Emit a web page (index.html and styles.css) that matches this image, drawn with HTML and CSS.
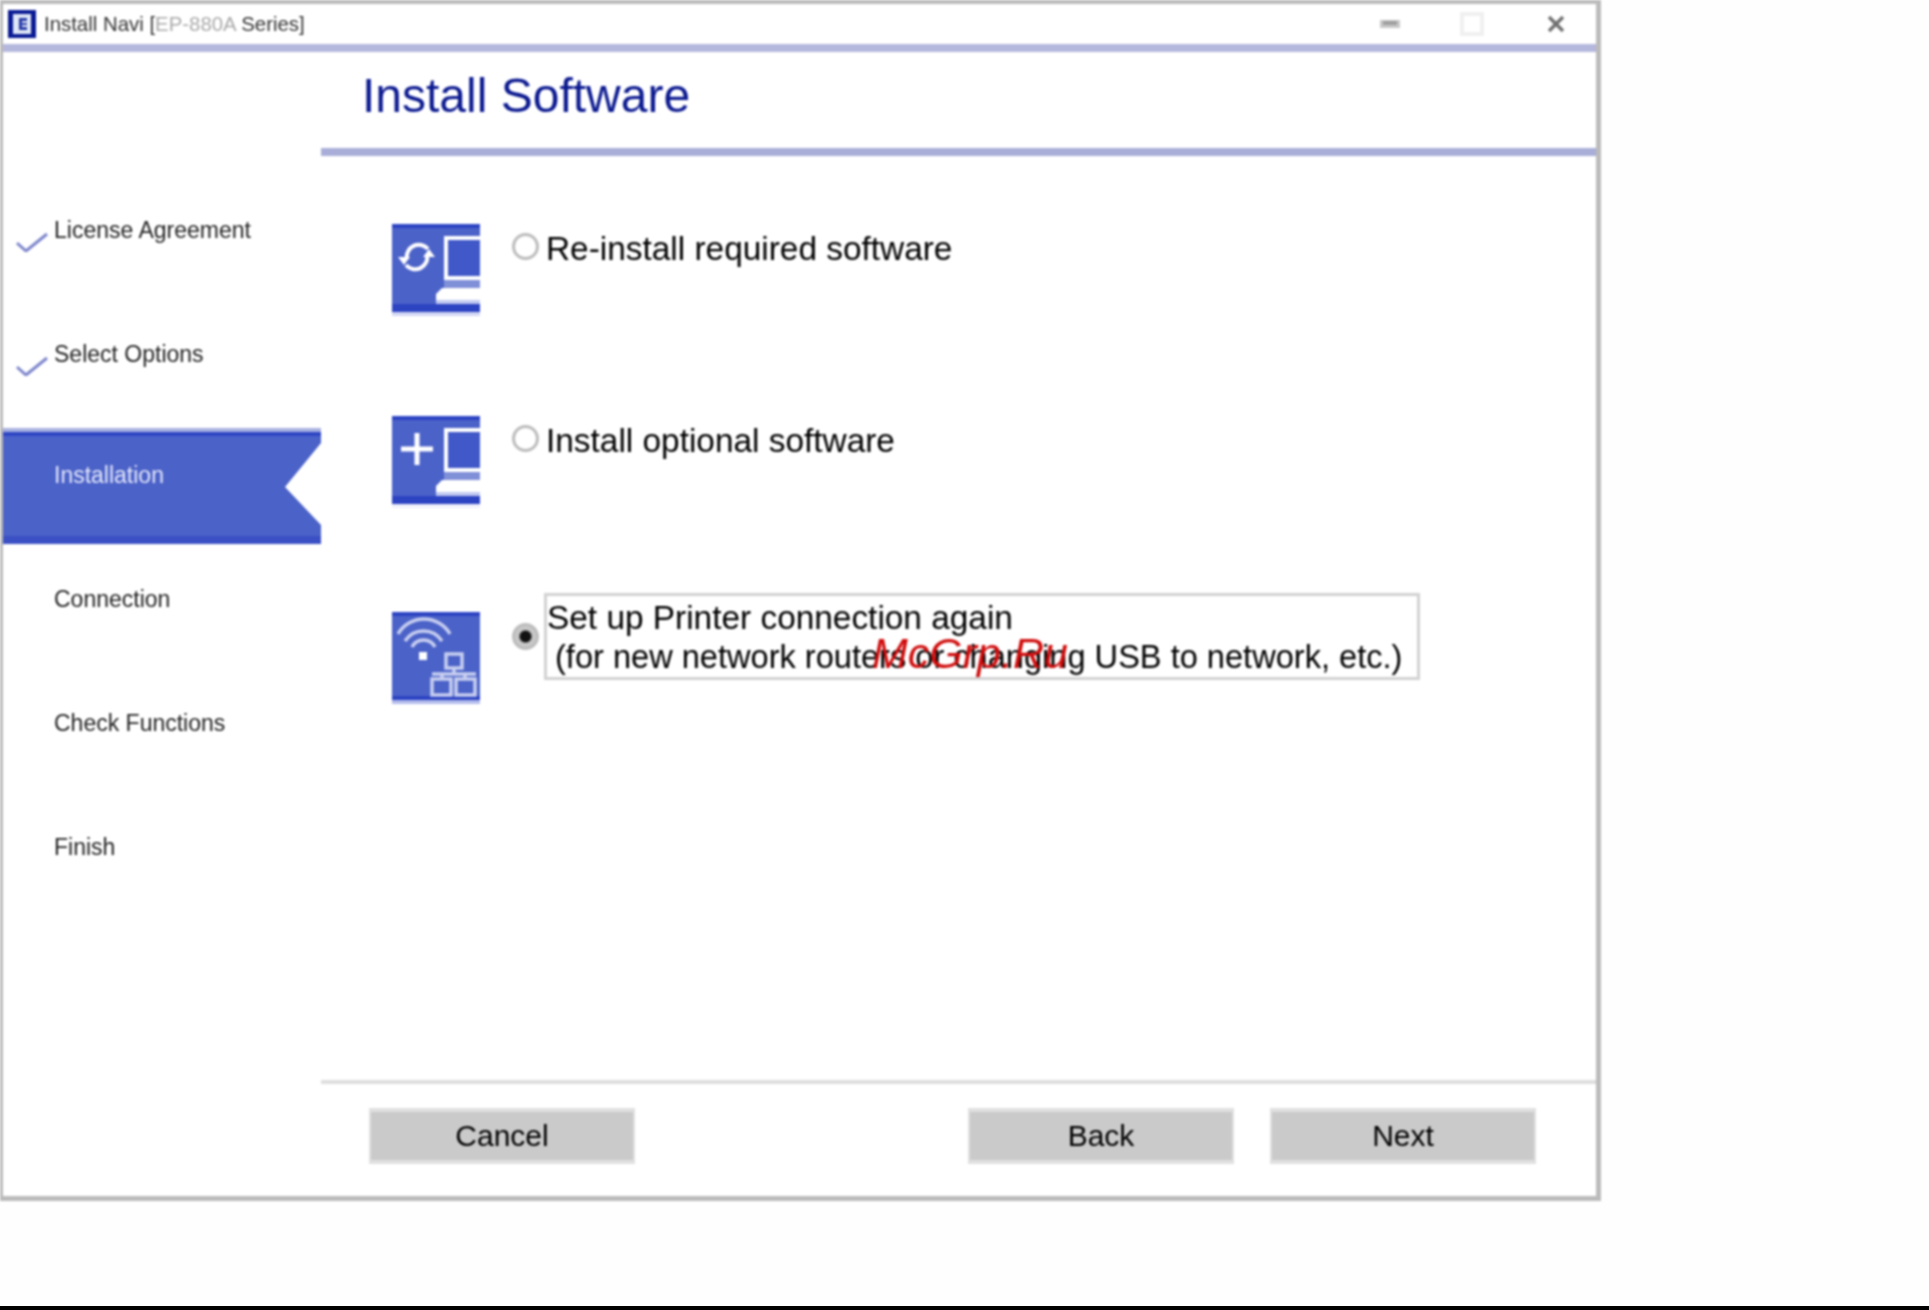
FILE: index.html
```html
<!DOCTYPE html>
<html lang="en">
<head>
<meta charset="utf-8">
<title>Install Navi</title>
<link rel="stylesheet" href="styles.css">
</head>
<body>
<div class="window">
  <header class="titlebar">
    <svg class="app-icon" viewBox="0 0 28 28"><rect width="28" height="28" fill="#0a1a94"/><rect x="5" y="4" width="18" height="20" fill="#dfe6f6"/><rect x="11" y="8" width="8" height="12" fill="#2a3ca8"/><rect x="14" y="11" width="5" height="2" fill="#dfe6f6"/><rect x="14" y="15" width="5" height="2" fill="#dfe6f6"/></svg>
    <span class="app-title">Install Navi [<span class="masked">EP-880A</span> Series]</span>
    <div class="controls">
      <svg class="ctl-min" viewBox="0 0 20 8"><rect width="20" height="8" fill="#c8c8c8"/><rect x="3" y="1" width="14" height="4" fill="#a0a0a0"/></svg>
      <svg class="ctl-max" viewBox="0 0 24 24"><rect x="2" y="2" width="20" height="20" fill="none" stroke="#f0f0f0" stroke-width="4"/></svg>
      <svg class="ctl-close" viewBox="0 0 24 24"><path d="M5 5L19 19M19 5L5 19" stroke="#707070" stroke-width="3.5" fill="none"/></svg>
    </div>
  </header>
  <div class="body">
    <nav class="steps">
      <div class="step done">
        <svg class="check" viewBox="0 0 32 20"><path d="M1 11L10 19L31 2" fill="none" stroke="#7d86cc" stroke-width="3"/></svg>
        <span>License Agreement</span>
      </div>
      <div class="step done">
        <svg class="check" viewBox="0 0 32 20"><path d="M1 11L10 19L31 2" fill="none" stroke="#7d86cc" stroke-width="3"/></svg>
        <span>Select Options</span>
      </div>
      <div class="step active"><span>Installation</span></div>
      <div class="step"><span>Connection</span></div>
      <div class="step"><span>Check Functions</span></div>
      <div class="step"><span>Finish</span></div>
    </nav>
    <main class="main">
      <h1 class="heading">Install Software</h1>
      <div class="options">
        <div class="option">
          <svg class="tile" viewBox="0 0 88 92">
            <rect width="88" height="92" fill="#d4d8f4"/><rect width="88" height="88" fill="#2c43c2"/><rect y="4" width="88" height="76" fill="#4b62c8"/>
            <rect x="52" y="12" width="36" height="44" fill="#fff"/><rect x="56" y="16" width="32" height="36" fill="#4058c8"/>
            <rect x="52" y="56" width="36" height="8" fill="#7f8fd8"/><path d="M44 76V70L50 64H88V76Z" fill="#fff"/><rect x="44" y="76" width="44" height="4" fill="#c0c8f0"/>
            <path d="M15 35A12 12 0 0 1 36 25M35 31A12 12 0 0 1 14 41" fill="none" stroke="#fff" stroke-width="4"/>
            <path d="M6 33H18L12 41ZM31 33H43L37 25Z" fill="#fff"/>
          </svg>
          <div class="choice">
            <span class="radio"></span>
            <span class="label">Re-install required software</span>
          </div>
        </div>
        <div class="option">
          <svg class="tile" viewBox="0 0 88 92">
            <rect width="88" height="92" fill="#f0f1fb"/><rect width="88" height="88" fill="#2c43c2"/><rect y="4" width="88" height="76" fill="#4b62c8"/>
            <rect x="52" y="12" width="36" height="44" fill="#fff"/><rect x="56" y="16" width="32" height="36" fill="#4058c8"/>
            <rect x="52" y="56" width="36" height="8" fill="#7f8fd8"/><path d="M44 76V70L50 64H88V76Z" fill="#fff"/><rect x="44" y="76" width="44" height="4" fill="#c0c8f0"/>
            <path d="M25 17V49M9 33H41" stroke="#fff" stroke-width="5" fill="none"/>
          </svg>
          <div class="choice">
            <span class="radio"></span>
            <span class="label">Install optional software</span>
          </div>
        </div>
        <div class="option">
          <svg class="tile" viewBox="0 0 88 92">
            <rect width="88" height="92" fill="#b4bcec"/><rect width="88" height="88" fill="#2c43c2"/><rect y="4" width="88" height="80" fill="#4b62c8"/>
            <g fill="none" stroke="#c8cff0" stroke-width="3.5">
              <path d="M6 22A30 30 0 0 1 58 22"/><path d="M13 29A22 22 0 0 1 50 29"/><path d="M20 35A13 13 0 0 1 43 35"/>
              <rect x="54" y="42" width="16" height="14"/><path d="M62 56V62M40 62H84"/><rect x="40" y="67" width="19" height="16"/><rect x="64" y="67" width="19" height="16"/>
              <path d="M50 62V67M73 62V67"/>
            </g>
            <rect x="27" y="40" width="8" height="8" fill="#fff"/>
          </svg>
          <div class="choice focused">
            <span class="radio checked"></span>
            <div class="label focus-box">
              <div>Set up Printer connection again</div>
              <div class="indent">(for new network routers or changing USB to network, etc.)</div>
              <span class="watermark">McGrp.Ru</span>
            </div>
          </div>
        </div>
      </div>
      <footer class="footer">
        <button class="btn">Cancel</button>
        <div class="nav-btns">
          <button class="btn">Back</button>
          <button class="btn">Next</button>
        </div>
      </footer>
    </main>
  </div>
</div>
<div class="page-rule"></div>
</body>
</html>
```
FILE: styles.css
```css
* { box-sizing: border-box; }
html, body { margin: 0; height: 100%; }
body {
  height: 1310px;
  background: #fefefe;
  display: flex;
  flex-direction: column;
  justify-content: space-between;
  overflow: hidden;
  font-family: "Liberation Sans", Arial, sans-serif;
}
.window {
  width: 1601px;
  height: 1201px;
  background: #fff;
  border-style: solid;
  border-color: #bbb;
  border-width: 4px 5px 5px 3px;
  display: flex;
  flex-direction: column;
  filter: blur(0.8px);
}
.titlebar {
  height: 48px;
  flex: none;
  border-bottom: 8px solid #b4b8dc;
  display: flex;
  align-items: center;
  padding: 0 28px 0 5px;
}
.app-icon { width: 28px; height: 28px; flex: none; }
.app-title { margin-left: 8px; font-size: 20.4px; color: #333; }
.masked { color: #aaa; }
.controls { margin-left: auto; display: flex; align-items: center; gap: 60px; }
.ctl-min { width: 20px; height: 8px; }
.ctl-max, .ctl-close { width: 24px; height: 24px; }
.body { flex: 1; display: flex; min-height: 0; }
.steps {
  width: 318px;
  flex: none;
  padding-top: 158px;
  display: flex;
  flex-direction: column;
}
.step {
  height: 40px;
  flex: none;
  margin-top: 84px;
  padding-left: 51px;
  display: flex;
  align-items: center;
  font-size: 23px;
  color: #222;
}
.step:first-child { margin-top: 0; }
.step.done { padding-left: 13px; gap: 6px; }
.check { width: 32px; height: 20px; flex: none; margin-top: 24px; }
.step.active {
  height: 116px;
  margin-top: 54px;
  padding-bottom: 22px;
  color: #e4e7fb;
  background: linear-gradient(#a8b0e0 0 4px, #2f46c4 4px 8px, #4b62c8 8px 108px, #3a50c4 108px);
  clip-path: polygon(0 0, 100% 0, 100% 15px, 282px 59px, 100% 97px, 100% 100%, 0 100%);
}
.step.active + .step { margin-top: 35px; }
.main { flex: 1; min-width: 0; display: flex; flex-direction: column; }
.heading {
  height: 104px;
  margin: 0;
  flex: none;
  padding: 0 0 0 41px;
  border-bottom: 8px solid #a8aed8;
  font-size: 48px;
  font-weight: 400;
  line-height: 88px;
  color: #0c1a90;
}
.options {
  padding: 68px 0 0 71px;
  display: flex;
  flex-direction: column;
  gap: 100px;
}
.option { display: flex; align-items: flex-start; gap: 32px; height: 92px; }
.option:last-child { margin-top: 4px; }
.tile { width: 88px; height: 92px; flex: none; }
.choice { display: flex; align-items: center; gap: 7px; margin-top: 2px; height: 40px; }
.choice > .label:not(.focus-box) { padding-top: 5px; }
.choice.focused { margin-top: -19px; height: 87px; }
.radio {
  width: 27px;
  height: 27px;
  flex: none;
  border-radius: 50%;
  border: 3px solid #bdbdbd;
  background: #fff;
}
.radio.checked {
  background: radial-gradient(circle, #111 0 5px, #c8c8c8 7px);
}
.label { font-size: 33.4px; line-height: 40px; color: #000; white-space: nowrap; }
.focus-box {
  position: relative;
  width: 876px;
  height: 87px;
  padding: 2px 0 0;
  border: 3px solid #d2d2d2;
  margin-left: -2px;
}
.indent { padding-left: 8px; font-size: 32.6px; margin-top: -1px; }
.watermark {
  position: absolute;
  left: 325px;
  top: 37px;
  font-size: 43px;
  font-style: italic;
  color: #d00c0c;
}
.footer {
  margin-top: auto;
  height: 116px;
  flex: none;
  border-top: 4px solid #dedede;
  padding: 24px 60px 0 48px;
  display: flex;
  align-items: flex-start;
  justify-content: space-between;
}
.nav-btns { display: flex; gap: 36px; }
.btn {
  width: 266px;
  height: 56px;
  padding: 0;
  border: solid #e0e0e0;
  border-width: 4px 2px 4px 2px;
  background: #cacaca;
  font-family: inherit;
  font-size: 30px;
  color: #000;
}
.page-rule { height: 4px; background: #000; flex: none; }
```
